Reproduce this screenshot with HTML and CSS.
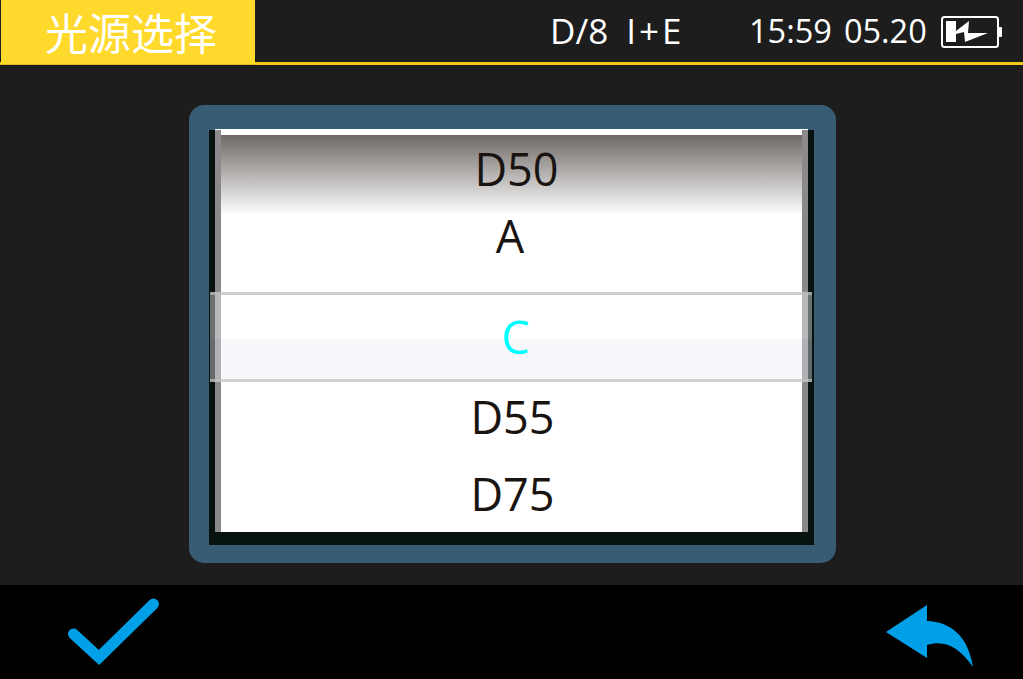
FILE: index.html
```html
<!DOCTYPE html>
<html lang="zh">
<head>
<meta charset="utf-8">
<title>光源选择</title>
<link rel="stylesheet" href="styles.css">
</head>
<body>
<div class="screen">
  <header class="topbar">
    <div class="title">光源选择</div>
    <div class="mode"><span>D/8</span><span class="mode-light">I+E</span></div>
    <div class="clock"><span>15:59</span><span>05.20</span></div>
    <svg class="battery" width="62" height="32" viewBox="0 0 62 32">
      <rect x="2" y="1" width="56" height="30" rx="2.5" fill="none" stroke="#fff" stroke-width="2"/>
      <path d="M58 11h3a1 1 0 0 1 1 1v8a1 1 0 0 1-1 1h-3z" fill="#fff"/>
      <path d="M6 5H16V15L29 5 28 17 48 17 25 26 24 16 16 18V26H6Z" fill="#fff"/>
    </svg>
  </header>
  <main class="content">
    <div class="panel">
      <div class="frame">
        <div class="list">
          <div class="row row-a">D50</div>
          <div class="row row-b">A</div>
          <div class="row row-c">C</div>
          <div class="row row-d">D55</div>
          <div class="row row-e">D75</div>
        </div>
        <div class="selection"></div>
      </div>
    </div>
  </main>
  <footer class="actions">
    <svg class="ok" width="92" height="70" viewBox="0 0 92 70">
      <path d="M6.500 38 32 61.500 86.500 8" fill="none" stroke="#00a0e9" stroke-width="11" stroke-linecap="round" stroke-linejoin="miter"/>
    </svg>
    <svg class="back" width="90" height="64" viewBox="0 0 90 64">
      <path d="M1 28 42 1V17C65 18 83 31 88 63 75 44 60 35 42 41V54Z" fill="#00a0e9"/>
    </svg>
  </footer>
</div>
</body>
</html>
```
FILE: styles.css
```css
* { box-sizing: border-box; }
html, body { margin: 0; padding: 0; }
body { background: #1d1d1d; }
.screen {
  width: 1023px;
  height: 679px;
  display: flex;
  flex-direction: column;
  overflow: hidden;
  font-family: "Open Sans", "Noto Sans CJK SC", sans-serif;
  color: #fff;
}
.topbar {
  height: 65px;
  flex: none;
  display: flex;
  align-items: center;
  border-bottom: 3px solid #f5c718;
  padding-left: 1px;
  background: #1d1d1d;
}
.title {
  width: 254px;
  height: 65px;
  flex: none;
  align-self: flex-start;
  background: #ffd92b;
  border-bottom: 1px solid #dcb622;
  color: #fff;
  font-family: "Noto Sans CJK SC", sans-serif;
  font-weight: 400;
  font-size: 43px;
  line-height: 62px;
  text-align: center;
  padding-left: 6px;
}
.mode {
  margin-left: 295px;
  width: 199px;
  display: flex;
  gap: 18px;
  font-size: 35px;
  line-height: 64px;
  white-space: nowrap;
}
.mode-light { letter-spacing: 3px; }
.clock {
  display: flex;
  gap: 12px;
  width: 191px;
  font-size: 32.500px;
  line-height: 64px;
  white-space: nowrap;
}
.battery { flex: none; margin-top: 2px; }
.content {
  flex: 1;
  display: flex;
  justify-content: center;
  align-items: flex-start;
  padding-top: 40px;
  padding-left: 2px;
}
.panel {
  width: 647px;
  height: 458px;
  background: #395c75;
  border-radius: 15px;
  padding: 25px 22px 18px 20px;
}
.frame {
  position: relative;
  height: 415px;
  background: #071311;
  padding: 0 6px 13px;
}
.list {
  height: 402px;
  border-left: 6px solid #8b898c;
  border-right: 6px solid #8b898c;
  background: linear-gradient(to bottom, #fff 0, #fff 5px, #6f6966 5px, #fff 85px) no-repeat #fff;
  box-shadow: 0 -1px 0 #fff;
  display: flex;
  flex-direction: column;
  align-items: center;
  color: #1a1411;
  font-size: 45px;
}
.row { line-height: 60px; flex: none; }
.row-a { margin-top: 9px; padding-left: 10px; }
.row-b { margin-top: 7px; margin-right: 3px; }
.row-c { margin-top: 41px; padding-left: 8px; color: #00ffff; position: relative; z-index: 1; }
.row-d { margin-top: 20px; padding-left: 2px; }
.row-e { margin-top: 17px; padding-left: 2px; }
.selection {
  position: absolute;
  left: 1px;
  right: 2px;
  top: 162px;
  height: 90px;
  border-top: 3px solid rgba(190, 190, 190, 0.7);
  border-bottom: 3px solid rgba(190, 190, 190, 0.7);
  background: linear-gradient(to bottom, rgba(255,255,255,.4) 0, rgba(255,255,255,.4) 44px, rgba(240,235,243,.4) 44px);
}
.actions {
  height: 94px;
  flex: none;
  background: #000;
  display: flex;
  justify-content: space-between;
  padding: 11px 48px 0 67px;
}
.ok { flex: none; }
.back { margin-top: 8px; flex: none; }
```
